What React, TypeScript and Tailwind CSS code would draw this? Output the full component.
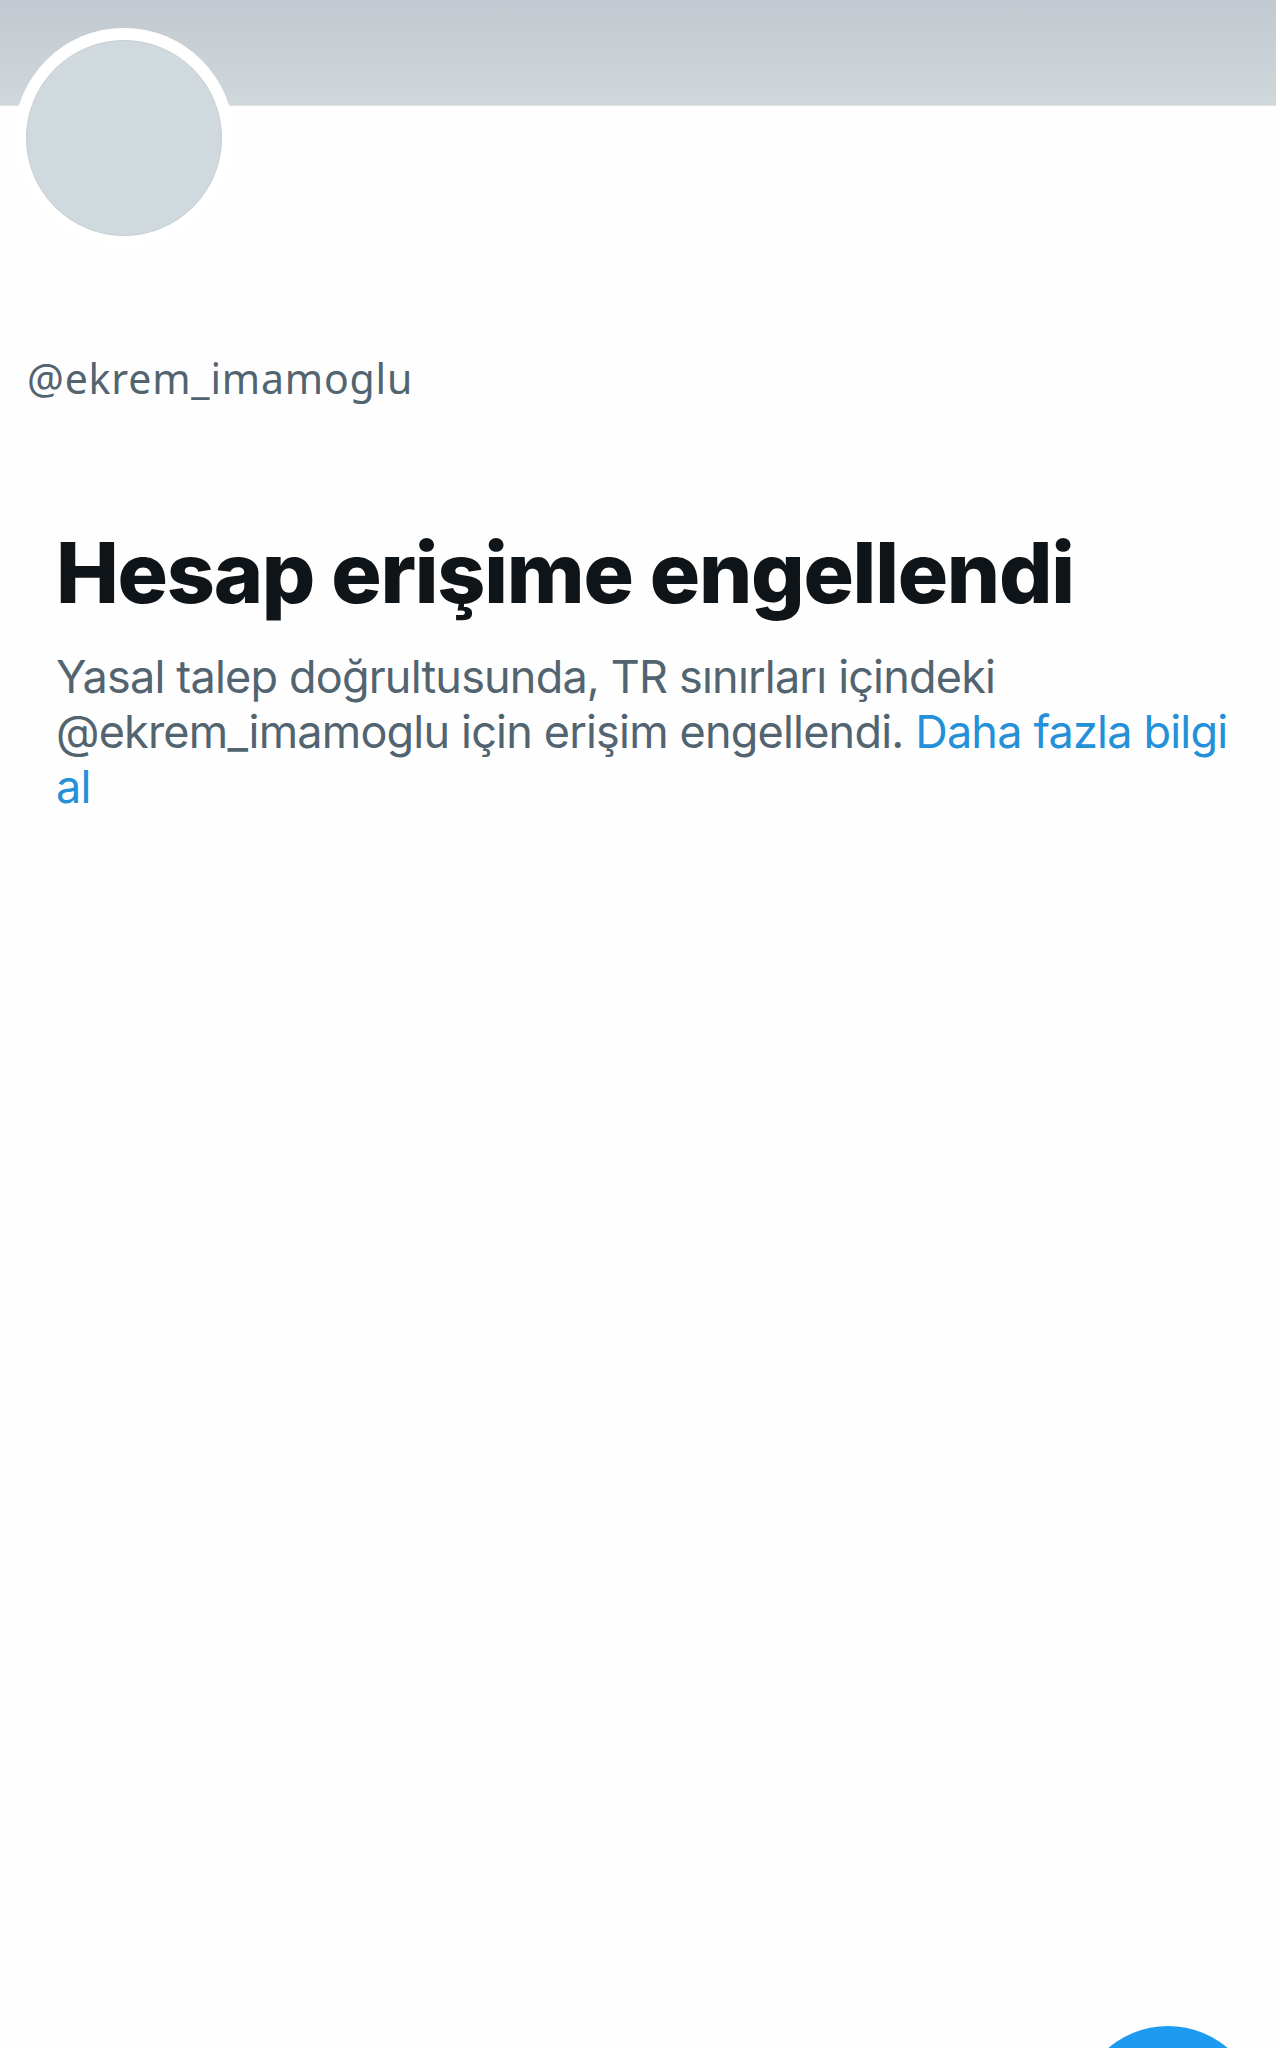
export default function App() {
  return (
    <div className="relative w-[1276px] h-[2048px] overflow-hidden bg-[#fefefe]">
      <div className="h-[106px] bg-gradient-to-b from-[#c1c8cf] to-[#d1d8dc] border-b border-[#dde2e5]" />
      <div className="pl-[14px] -mt-[78px]">
        <div className="w-[220px] h-[220px] rounded-full bg-white p-[12px]">
          <div className="w-full h-full rounded-full bg-[#cfd9de] border border-[#c6cfd4]" />
        </div>
      </div>
      <div className="pl-[27px] mt-[103px] text-[41px] leading-[54px] tracking-[0.02em] font-normal text-[#536471] font-['Noto_Sans',sans-serif]">
        @ekrem_imamoglu
      </div>
      <div className="pl-[56px] pr-[40px] font-['Inter',sans-serif]">
        <h1 className="mt-[126px] text-[84px] leading-none font-extrabold tracking-[-0.015em] text-[#0f1419]">
          Hesap erişime engellendi
        </h1>
        <p className="mt-[34px] text-[45px] leading-[55px] tracking-[-0.018em] text-[#536471] w-[1185px]">
          Yasal talep doğrultusunda, TR sınırları içindeki @ekrem_imamoglu için erişim engellendi.{" "}
          <span className="text-[#2490d8]">Daha fazla bilgi al</span>
        </p>
      </div>
      <div className="absolute left-[1076px] top-[2026px] w-[184px] h-[184px] rounded-full bg-[#1d9bf0]" />
    </div>
  );
}
